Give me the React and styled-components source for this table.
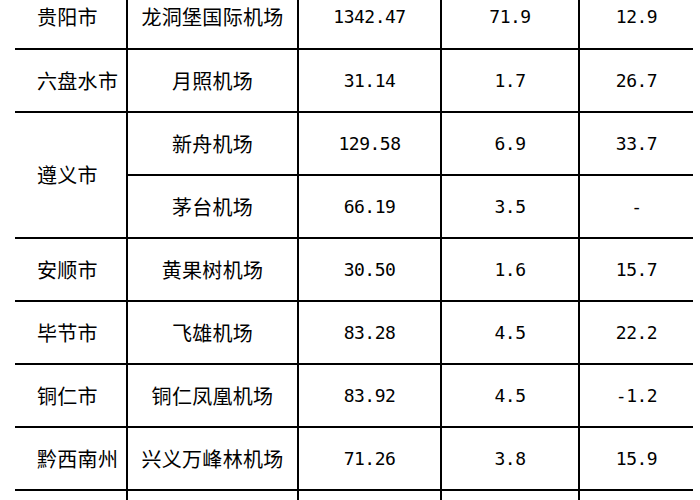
import React from "react";
import styled, { createGlobalStyle } from "styled-components";

const Global = createGlobalStyle`
  html, body { margin: 0; padding: 0; background: #fff; overflow: hidden; }
  body { width: 700px; height: 500px; }
`;

const Page = styled.div`
  width: 700px;
  height: 500px;
  overflow: hidden;
  background: #fff;
  padding-left: 15px;
  box-sizing: border-box;
`;

const Grid = styled.div`
  display: grid;
  grid-template-columns: 113px 171px 143px 138px 113px;
  grid-auto-rows: 63px;
  grid-template-rows: 64px;
  margin-top: -14px;
  background: #fff;
`;

const Cell = styled.div`
  box-sizing: border-box;
  display: flex;
  align-items: center;
  justify-content: ${(p) => (p.$left ? "flex-start" : "center")};
  padding-left: ${(p) => (p.$left ? "22px" : "0")};
  border: 0 solid #000;
  border-bottom-width: 2px;
  border-right-width: ${(p) => (p.$last ? "0" : "2px")};
  grid-row: ${(p) => (p.$span ? `span ${p.$span}` : "auto")};
  color: #000;
  font-family: ${(p) =>
    p.$num
      ? '"DejaVu Sans Mono", "Liberation Mono", monospace'
      : '"Noto Sans CJK SC", "Noto Sans", sans-serif'};
  font-size: ${(p) => (p.$num ? "18px" : "20px")};
  letter-spacing: ${(p) => (p.$num ? "-0.5px" : "0.3px")};
  white-space: nowrap;
  line-height: 1;
`;

const rows = [
  { city: "贵阳市", airport: "龙洞堡国际机场", a: "1342.47", b: "71.9", c: "12.9" },
  { city: "六盘水市", airport: "月照机场", a: "31.14", b: "1.7", c: "26.7" },
  { city: "遵义市", span: 2, airport: "新舟机场", a: "129.58", b: "6.9", c: "33.7" },
  { airport: "茅台机场", a: "66.19", b: "3.5", c: "-" },
  { city: "安顺市", airport: "黄果树机场", a: "30.50", b: "1.6", c: "15.7" },
  { city: "毕节市", airport: "飞雄机场", a: "83.28", b: "4.5", c: "22.2" },
  { city: "铜仁市", airport: "铜仁凤凰机场", a: "83.92", b: "4.5", c: "-1.2" },
  { city: "黔西南州", airport: "兴义万峰林机场", a: "71.26", b: "3.8", c: "15.9" },
  { city: "", airport: "", a: "", b: "", c: "" },
];

export default function App() {
  return (
    <Page>
      <Global />
      <Grid>
        {rows.map((r, i) => (
          <React.Fragment key={i}>
            {r.city !== undefined && (
              <Cell $left $span={r.span}>
                {r.city}
              </Cell>
            )}
            <Cell>{r.airport}</Cell>
            <Cell $num>{r.a}</Cell>
            <Cell $num>{r.b}</Cell>
            <Cell $num $last>
              {r.c}
            </Cell>
          </React.Fragment>
        ))}
      </Grid>
    </Page>
  );
}
